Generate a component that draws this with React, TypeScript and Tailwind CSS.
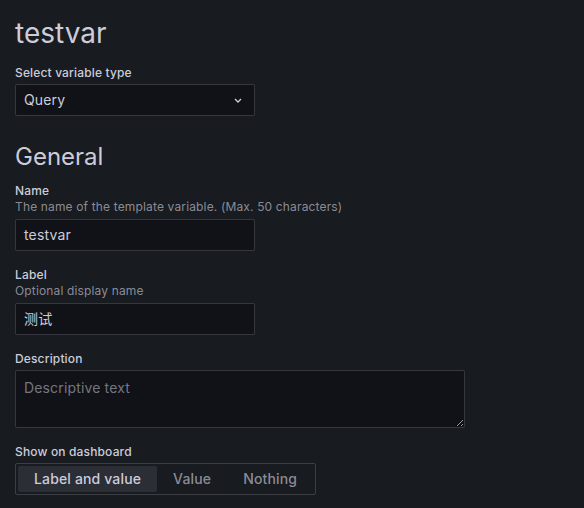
const SHOW_OPTIONS = ["Label and value", "Value", "Nothing"];

function FieldLabel({ label, description }: { label: string; description?: string }) {
  return (
    <div className="mb-1">
      <div className="text-xs font-medium leading-[15px] text-[#ccccdc]">{label}</div>
      {description && (
        <div className="text-xs leading-[17px] text-[#ccccdc]/65">{description}</div>
      )}
    </div>
  );
}

function TextInput({ value }: { value: string }) {
  return (
    <div className="flex h-8 w-[240px] items-center rounded-[2px] border border-[#ccccdc]/20 bg-[#111217] px-2 text-sm text-[#ccccdc]">
      {value}
    </div>
  );
}

export default function App() {
  return (
    <main
      className="min-h-[508px] bg-[#181b1f] px-[15px] pt-4 tracking-[0.15px] text-[#ccccdc]"
      style={{ fontFamily: 'Inter, "Noto Sans CJK SC", sans-serif' }}
    >
      <h1 className="mb-[15px] text-[28px] font-normal leading-[34px] tracking-normal text-[#ccccdc]">testvar</h1>

      <div className="mb-4">
        <FieldLabel label="Select variable type" />
        <div className="flex h-8 w-[240px] items-center justify-between rounded-[2px] border border-[#ccccdc]/20 bg-[#111217] px-2 text-sm text-[#ccccdc]">
          <span>Query</span>
          <svg width="8" height="5" viewBox="0 0 8 5" className="mr-1">
            <path d="M1 1 L4 4 L7 1" fill="none" stroke="#ccccdc" strokeWidth="1.3" />
          </svg>
        </div>
      </div>

      <h2 className="mb-3 mt-[26px] text-2xl font-normal leading-[29px] tracking-normal text-[#ccccdc]">General</h2>

      <div className="mb-4">
        <FieldLabel label="Name" description="The name of the template variable. (Max. 50 characters)" />
        <TextInput value="testvar" />
      </div>

      <div className="mb-4">
        <FieldLabel label="Label" description="Optional display name" />
        <TextInput value="测试" />
      </div>

      <div className="mb-4">
        <FieldLabel label="Description" />
        <textarea
          readOnly
          placeholder="Descriptive text"
          className="block h-[58px] w-[450px] rounded-[2px] border border-[#ccccdc]/20 bg-[#111217] px-2 pt-[7px] text-sm leading-5 text-[#ccccdc] outline-none placeholder:text-[#ccccdc]/55"
        />
      </div>

      <div>
        <FieldLabel label="Show on dashboard" />
        <div className="inline-flex rounded-[2px] border border-[#ccccdc]/20 p-[2px]">
          {SHOW_OPTIONS.map((opt, i) => (
            <div
              key={opt}
              className={
                i === 0
                  ? "flex h-[26px] items-center rounded-[2px] bg-[#2b2e34] px-4 text-sm font-medium text-[#ccccdc]"
                  : "flex h-[26px] items-center px-4 text-sm font-medium text-[#ccccdc]/65"
              }
            >
              {opt}
            </div>
          ))}
        </div>
      </div>
    </main>
  );
}
